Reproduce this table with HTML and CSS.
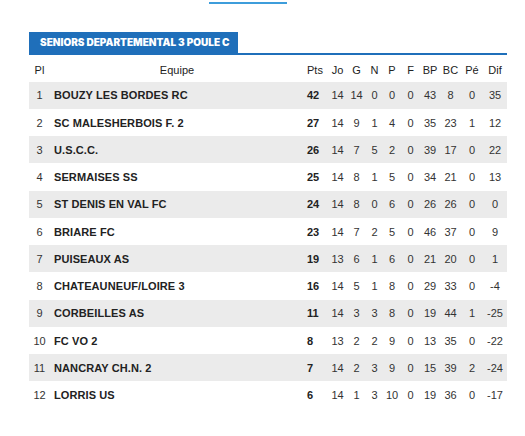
FILE: index.html
```html
<!DOCTYPE html>
<html lang="fr">
<head>
<meta charset="utf-8">
<title>Classement</title>
<link rel="stylesheet" href="styles.css">
</head>
<body>
<div class="top"><span class="top-line"></span></div>
<section class="ranking">
  <div class="tabs"><div class="tab">SENIORS DEPARTEMENTAL 3 POULE C</div></div>
  <table class="table">
    <colgroup>
      <col class="c-pl"><col class="c-team"><col class="c-pts"><col class="c-jo"><col class="c-g"><col class="c-n"><col class="c-p"><col class="c-f"><col class="c-bp"><col class="c-bc"><col class="c-pe"><col class="c-dif">
    </colgroup>
    <thead>
      <tr><th>Pl</th><th>Equipe</th><th class="left">Pts</th><th>Jo</th><th>G</th><th>N</th><th>P</th><th>F</th><th>BP</th><th>BC</th><th>Pé</th><th>Dif</th></tr>
    </thead>
    <tbody>
      <tr><td>1</td><td class="team">BOUZY LES BORDES RC</td><td class="pts">42</td><td>14</td><td>14</td><td>0</td><td>0</td><td>0</td><td>43</td><td>8</td><td>0</td><td>35</td></tr>
      <tr><td>2</td><td class="team">SC MALESHERBOIS F. 2</td><td class="pts">27</td><td>14</td><td>9</td><td>1</td><td>4</td><td>0</td><td>35</td><td>23</td><td>1</td><td>12</td></tr>
      <tr><td>3</td><td class="team">U.S.C.C.</td><td class="pts">26</td><td>14</td><td>7</td><td>5</td><td>2</td><td>0</td><td>39</td><td>17</td><td>0</td><td>22</td></tr>
      <tr><td>4</td><td class="team">SERMAISES SS</td><td class="pts">25</td><td>14</td><td>8</td><td>1</td><td>5</td><td>0</td><td>34</td><td>21</td><td>0</td><td>13</td></tr>
      <tr><td>5</td><td class="team">ST DENIS EN VAL FC</td><td class="pts">24</td><td>14</td><td>8</td><td>0</td><td>6</td><td>0</td><td>26</td><td>26</td><td>0</td><td>0</td></tr>
      <tr><td>6</td><td class="team">BRIARE FC</td><td class="pts">23</td><td>14</td><td>7</td><td>2</td><td>5</td><td>0</td><td>46</td><td>37</td><td>0</td><td>9</td></tr>
      <tr><td>7</td><td class="team">PUISEAUX AS</td><td class="pts">19</td><td>13</td><td>6</td><td>1</td><td>6</td><td>0</td><td>21</td><td>20</td><td>0</td><td>1</td></tr>
      <tr><td>8</td><td class="team">CHATEAUNEUF/LOIRE 3</td><td class="pts">16</td><td>14</td><td>5</td><td>1</td><td>8</td><td>0</td><td>29</td><td>33</td><td>0</td><td>-4</td></tr>
      <tr><td>9</td><td class="team">CORBEILLES AS</td><td class="pts">11</td><td>14</td><td>3</td><td>3</td><td>8</td><td>0</td><td>19</td><td>44</td><td>1</td><td>-25</td></tr>
      <tr><td>10</td><td class="team">FC VO 2</td><td class="pts">8</td><td>13</td><td>2</td><td>2</td><td>9</td><td>0</td><td>13</td><td>35</td><td>0</td><td>-22</td></tr>
      <tr><td>11</td><td class="team">NANCRAY CH.N. 2</td><td class="pts">7</td><td>14</td><td>2</td><td>3</td><td>9</td><td>0</td><td>15</td><td>39</td><td>2</td><td>-24</td></tr>
      <tr><td>12</td><td class="team">LORRIS US</td><td class="pts">6</td><td>14</td><td>1</td><td>3</td><td>10</td><td>0</td><td>19</td><td>36</td><td>0</td><td>-17</td></tr>
    </tbody>
  </table>
</section>
</body>
</html>
```
FILE: styles.css
```css
html, body {
  margin: 0;
  padding: 0;
  background: #ffffff;
}
body {
  font-family: "Liberation Sans", Arial, sans-serif;
  color: #333;
}
.top {
  height: 32px;
  padding-left: 209px;
  box-sizing: border-box;
  padding-top: 2px;
}
.top-line {
  display: block;
  width: 78px;
  height: 2px;
  background: #3d9ddb;
}
.ranking {
  margin-left: 29px;
  width: 478px;
}
.tabs {
  border-bottom: 2px solid #1f6fba;
  display: flex;
}
.tab {
  background: #1f6fba;
  color: #fff;
  font-family: Inter, "Open Sans", sans-serif;
  font-weight: 900;
  font-size: 10px;
  height: 21px;
  line-height: 21px;
  width: 209px;
  box-sizing: border-box;
  padding-left: 11px;
  letter-spacing: 0;
  white-space: nowrap;
}
.table {
  border-collapse: collapse;
  table-layout: fixed;
  width: 478px;
  font-size: 11px;
}
.c-pl { width: 21px; }
.c-team { width: 254px; }
.c-pts { width: 24px; }
.c-jo { width: 19px; }
.c-g { width: 19px; }
.c-n { width: 17px; }
.c-p { width: 18px; }
.c-f { width: 19px; }
.c-bp { width: 20px; }
.c-bc { width: 21px; }
.c-pe { width: 22px; }
.c-dif { width: 24px; }
th {
  font-weight: normal;
  color: #222;
  height: 26.7px;
  padding: 3px 0 0 0;
  text-align: center;
  box-sizing: border-box;
}
th.left { text-align: left; padding-left: 3px; }
td {
  height: 27.25px;
  padding: 0;
  text-align: center;
  color: #333;
  white-space: nowrap;
  box-sizing: border-box;
}
tbody tr:nth-child(odd) { background: #ebebeb; }
td.team {
  text-align: left;
  padding-left: 4px;
  font-weight: bold;
  color: #222;
  letter-spacing: 0.1px;
}
td.pts {
  text-align: left;
  padding-left: 3px;
  font-weight: bold;
  color: #222;
}
```
